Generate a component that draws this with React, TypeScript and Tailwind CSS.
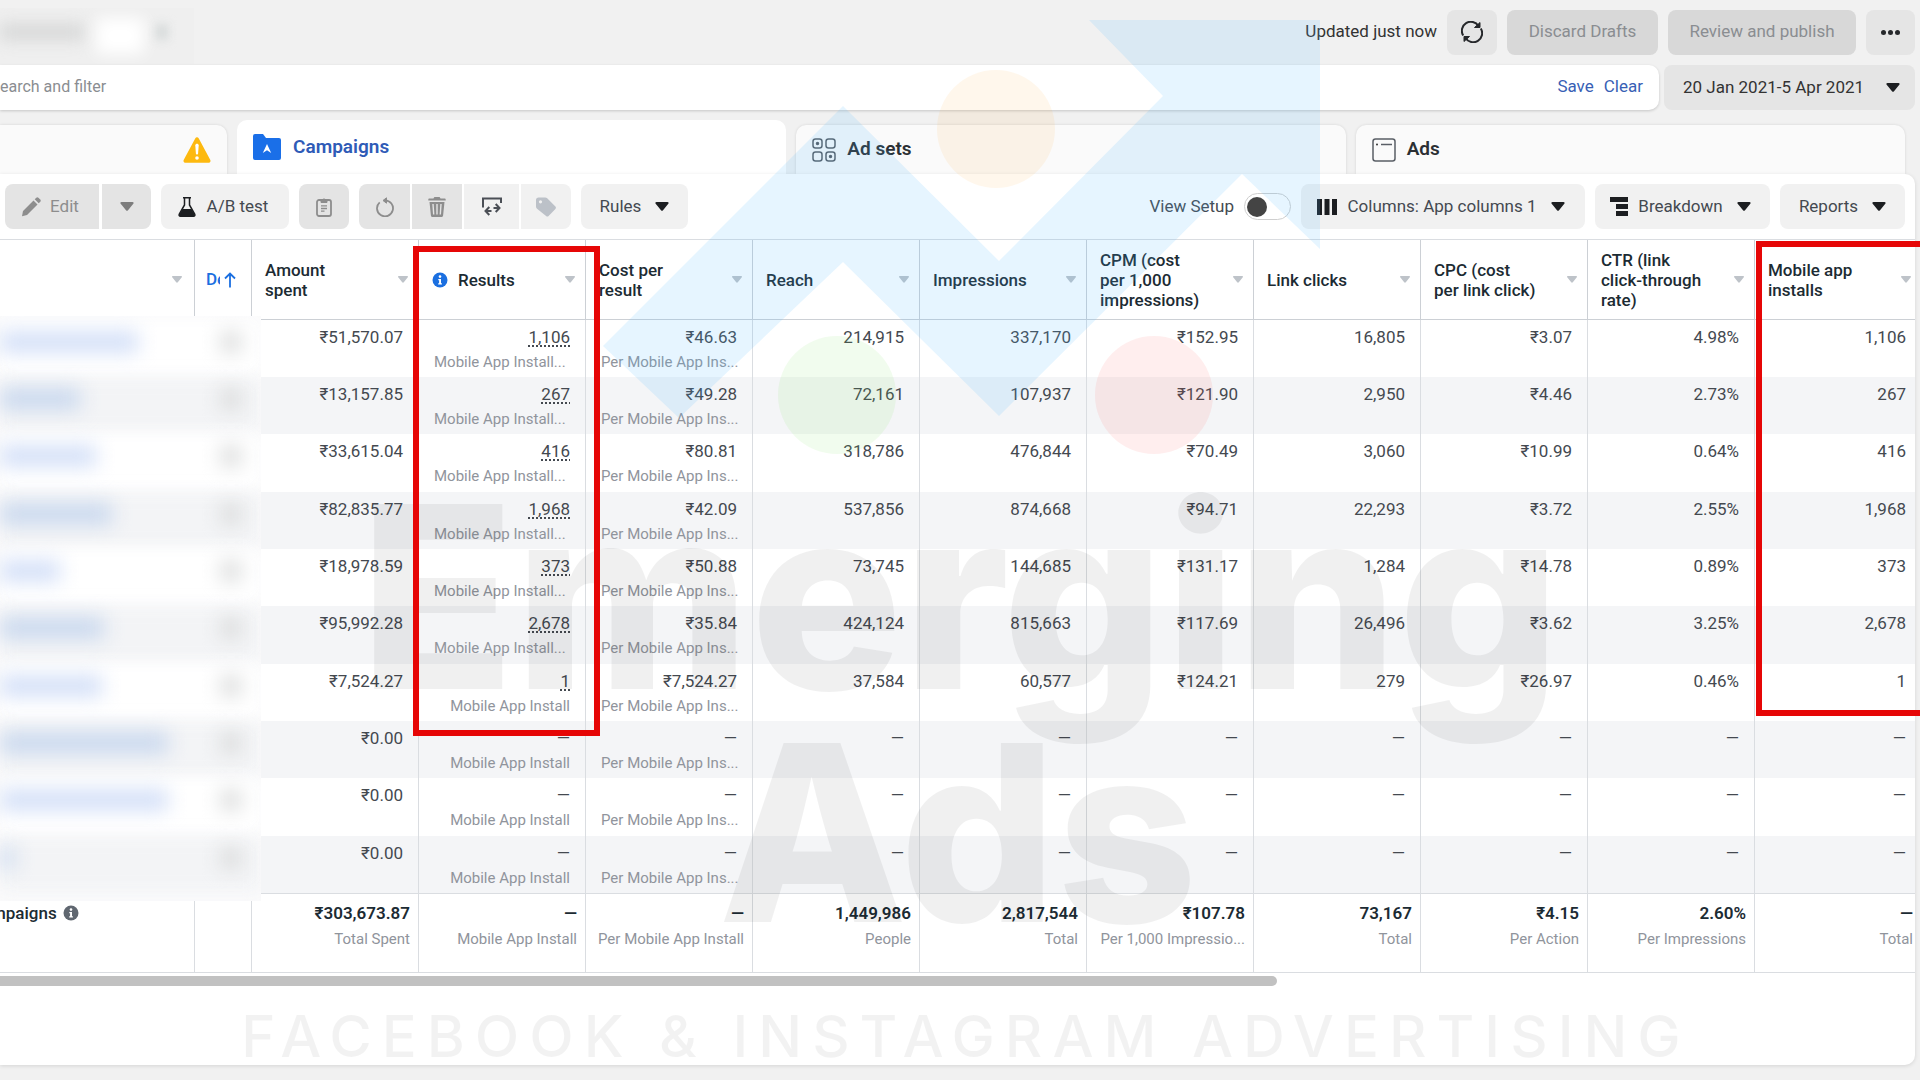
import type { ReactNode } from 'react';
import clsx from 'clsx';

type ToolButtonProps = {
  label?: string;
  children: ReactNode;
  disabled?: boolean;
  className?: string;
};

type Campaign = {
  nameWidth: number;
  spent: string;
  results: string;
  resultsNote: string;
  cost: string;
  rest: string[];
};

const DASH = '—';
const PER_INSTALL = 'Per Mobile App Ins...';

const campaigns: Campaign[] = [
  { nameWidth: 138, spent: '₹51,570.07', results: '1,106', resultsNote: 'Mobile App Install...', cost: '₹46.63', rest: ['214,915', '337,170', '₹152.95', '16,805', '₹3.07', '4.98%', '1,106'] },
  { nameWidth: 80, spent: '₹13,157.85', results: '267', resultsNote: 'Mobile App Install...', cost: '₹49.28', rest: ['72,161', '107,937', '₹121.90', '2,950', '₹4.46', '2.73%', '267'] },
  { nameWidth: 96, spent: '₹33,615.04', results: '416', resultsNote: 'Mobile App Install...', cost: '₹80.81', rest: ['318,786', '476,844', '₹70.49', '3,060', '₹10.99', '0.64%', '416'] },
  { nameWidth: 112, spent: '₹82,835.77', results: '1,968', resultsNote: 'Mobile App Install...', cost: '₹42.09', rest: ['537,856', '874,668', '₹94.71', '22,293', '₹3.72', '2.55%', '1,968'] },
  { nameWidth: 60, spent: '₹18,978.59', results: '373', resultsNote: 'Mobile App Install...', cost: '₹50.88', rest: ['73,745', '144,685', '₹131.17', '1,284', '₹14.78', '0.89%', '373'] },
  { nameWidth: 104, spent: '₹95,992.28', results: '2,678', resultsNote: 'Mobile App Install...', cost: '₹35.84', rest: ['424,124', '815,663', '₹117.69', '26,496', '₹3.62', '3.25%', '2,678'] },
  { nameWidth: 102, spent: '₹7,524.27', results: '1', resultsNote: 'Mobile App Install', cost: '₹7,524.27', rest: ['37,584', '60,577', '₹124.21', '279', '₹26.97', '0.46%', '1'] },
  { nameWidth: 168, spent: '₹0.00', results: DASH, resultsNote: 'Mobile App Install', cost: DASH, rest: [DASH, DASH, DASH, DASH, DASH, DASH, DASH] },
  { nameWidth: 168, spent: '₹0.00', results: DASH, resultsNote: 'Mobile App Install', cost: DASH, rest: [DASH, DASH, DASH, DASH, DASH, DASH, DASH] },
  { nameWidth: 14, spent: '₹0.00', results: DASH, resultsNote: 'Mobile App Install', cost: DASH, rest: [DASH, DASH, DASH, DASH, DASH, DASH, DASH] },
];

const totals = [
  ['₹303,673.87', 'Total Spent'],
  [DASH, 'Mobile App Install'],
  [DASH, 'Per Mobile App Install'],
  ['1,449,986', 'People'],
  ['2,817,544', 'Total'],
  ['₹107.78', 'Per 1,000 Impressio...'],
  ['73,167', 'Total'],
  ['₹4.15', 'Per Action'],
  ['2.60%', 'Per Impressions'],
  [DASH, 'Total'],
];

const columns = [
  'Amount\nspent',
  'Results',
  'Cost per\nresult',
  'Reach',
  'Impressions',
  'CPM (cost\nper 1,000\nimpressions)',
  'Link clicks',
  'CPC (cost\nper link click)',
  'CTR (link\nclick-through\nrate)',
  'Mobile app\ninstalls',
];

function Caret({ className = 'text-[#1c1e21]' }: { className?: string }) {
  return (
    <svg viewBox="0 0 14 9" className={clsx('h-[9px] w-[14px] shrink-0', className)} fill="currentColor" aria-hidden="true">
      <path d="M1.5 0h11c1 0 1.5 1 .8 1.8L8 8.300c-.6.700-1.400.700-2 0L.7 1.800C0 1 .5 0 1.500 0Z" />
    </svg>
  );
}

function SortCaret() {
  return (
    <svg viewBox="0 0 10 7" className="h-[7px] w-[10px] shrink-0 text-[#bec3c9]" fill="currentColor" aria-hidden="true">
      <path d="M.8 0h8.400c.8 0 1 .7.6 1.200L5.800 6.300c-.5.6-1.100.6-1.600 0L.2 1.200C-.2.7 0 0 .8 0Z" />
    </svg>
  );
}

function InfoIcon({ className }: { className: string }) {
  return (
    <svg viewBox="0 0 16 16" className={clsx('size-4 shrink-0', className)} aria-hidden="true">
      <circle cx="8" cy="8" r="7.500" fill="currentColor" />
      <path d="M6.300 7h2.700v4.200h.9v1.300H6.200v-1.300h.9V8.300h-.8V7Z" fill="#fff" />
      <circle cx="8" cy="4.600" r="1.300" fill="#fff" />
    </svg>
  );
}

function ToolButton({ label, children, disabled = false, className }: ToolButtonProps) {
  return (
    <button
      type="button"
      aria-label={label}
      disabled={disabled}
      className={clsx(
        'flex h-[45px] shrink-0 items-center justify-center whitespace-nowrap',
        disabled ? 'bg-[#e4e4e4] text-[#8d8d8d]' : 'bg-[#f1f1f1] text-[#444950]',
        className,
      )}
    >
      {children}
    </button>
  );
}

function TopBar() {
  return (
    <header className="flex h-[65px] items-center justify-between pr-[5px] pb-px">
      {/* account switcher, obscured */}
      <div className="mt-2 flex h-[56px] w-[194px] items-center overflow-hidden bg-[#efefef]">
        <span className="-mt-2 h-4 w-[84px] bg-[#d6d7d7] blur-[8px]" />
        <span className="ml-3 h-9 w-12 bg-white blur-[8px]" />
        <span className="-mt-2 ml-3 h-4 w-3 bg-[#d6dada] blur-[5px]" />
      </div>
      <div className="flex items-center gap-[10px]">
        <span className="text-[#333]">Updated just now</span>
        <button type="button" aria-label="Refresh" className="flex h-[45px] w-[50px] items-center justify-center rounded-lg bg-[#e5e5e5]">
          <svg viewBox="0 0 22 22" className="size-[22px]" fill="none" stroke="#26282b" strokeWidth="2" aria-hidden="true">
            <path d="M2.200 14.500A9 9 0 0 1 17.500 5M19.800 7.500A9 9 0 0 1 4.500 17" />
            <path d="M19 1.500v5h-5.500ZM3 20.500v-5h5.500Z" fill="#26282b" strokeWidth="1" />
          </svg>
        </button>
        <button type="button" disabled className="h-[45px] w-[151px] rounded-lg bg-[#d8d8d8] text-[#8a8d91]">
          Discard Drafts
        </button>
        <button type="button" disabled className="h-[45px] w-[188px] rounded-lg bg-[#d8d8d8] text-[#8a8d91]">
          Review and publish
        </button>
        <button type="button" aria-label="More" className="flex h-[45px] w-[49px] items-center justify-center gap-[2px] rounded-lg bg-[#e5e5e5]">
          <span className="size-[5px] rounded-full bg-[#26282b]" />
          <span className="size-[5px] rounded-full bg-[#26282b]" />
          <span className="size-[5px] rounded-full bg-[#26282b]" />
        </button>
      </div>
    </header>
  );
}

function FilterBar() {
  return (
    <div className="flex gap-[5px] pr-[5px]">
      <div className="flex h-[45px] flex-1 items-center rounded-r-[10px] bg-white pr-4 pb-px shadow-[0_1px_3px_rgba(0,0,0,0.18)]">
        <input
          type="text"
          aria-label="Search and filter"
          placeholder="earch and filter"
          className="min-w-0 flex-1 bg-transparent text-[16px] outline-none placeholder:text-[#8a8d91]"
        />
        <button type="button" className="text-[#385fb5]">Save</button>
        <button type="button" className="ml-[10px] text-[#385fb5]">Clear</button>
      </div>
      <button type="button" className="flex h-[45px] w-[251px] items-center justify-between rounded-lg bg-[#e5e5e5] pr-[15px] pl-[19px] text-[#333]">
        20 Jan 2021-5 Apr 2021
        <Caret />
      </button>
    </div>
  );
}

function LevelTabs() {
  return (
    <nav className="mt-[10px] flex items-end gap-[10px] pr-[15px] text-[19px] font-semibold">
      <div className="flex h-[49px] w-[227px] shrink-0 items-center justify-end rounded-tr-[10px] bg-[#fafafa] pr-4 shadow-[0_0_3px_rgba(0,0,0,0.12)]">
        <svg viewBox="0 0 28 26" className="h-[26px] w-[28px]" aria-label="Warning">
          <path d="M12.200 1.400c.8-1.500 2.800-1.500 3.600 0l11.400 21.400c.8 1.500-.1 3-1.800 3H2.600c-1.700 0-2.600-1.500-1.800-3L12.200 1.400Z" fill="#fdb90f" />
          <path d="M12.300 8.500c0-2.300 3.400-2.300 3.400 0l-.6 8c-.1 1.300-2.100 1.300-2.200 0l-.6-8Z" fill="#fff" />
          <circle cx="14" cy="21" r="1.800" fill="#fff" />
        </svg>
      </div>
      <a href="#campaigns" className="flex h-[54px] flex-1 items-center gap-3 rounded-t-[10px] bg-white px-4 text-[#2f5bb7]">
        <svg viewBox="0 0 28 26" className="h-[26px] w-[28px] shrink-0" aria-hidden="true">
          <path d="M2 0h8l3 4h13a2 2 0 0 1 2 2v18a2 2 0 0 1-2 2H2a2 2 0 0 1-2-2V2a2 2 0 0 1 2-2Z" fill="#1a6fe8" />
          <path d="m14 10 4.200 9-4.200-2.800L9.800 19 14 10Z" fill="#fff" />
        </svg>
        Campaigns
      </a>
      <a href="#adsets" className="flex h-[49px] flex-1 items-center gap-[11px] rounded-t-[10px] bg-[#fafafa] px-4 text-[#2b2f33] shadow-[0_0_3px_rgba(0,0,0,0.12)]">
        <svg viewBox="0 0 24 24" className="size-6 shrink-0" fill="none" stroke="#5a5f66" strokeWidth="1.500" aria-hidden="true">
          <rect x="1" y="1" width="9" height="9" rx="2.500" />
          <rect x="14" y="1" width="9" height="9" rx="2.500" />
          <rect x="1" y="14" width="9" height="9" rx="2.500" />
          <rect x="14" y="14" width="9" height="9" rx="2.500" />
          <circle cx="5.500" cy="5.500" r="1" fill="#333" />
          <circle cx="18.500" cy="18.500" r="1" fill="#333" />
        </svg>
        Ad sets
      </a>
      <a href="#ads" className="flex h-[49px] flex-1 items-center gap-[11px] rounded-t-[10px] bg-[#fafafa] px-4 text-[#2b2f33] shadow-[0_0_3px_rgba(0,0,0,0.12)]">
        <svg viewBox="0 0 24 24" className="size-6 shrink-0" fill="none" stroke="#5a5f66" strokeWidth="1.500" aria-hidden="true">
          <rect x="1" y="1" width="22" height="22" rx="2.500" />
          <path d="M9 6.500h11" />
          <circle cx="5" cy="6.500" r="1" fill="#333" stroke="none" />
        </svg>
        Ads
      </a>
    </nav>
  );
}

function Toolbar() {
  return (
    <div className="flex items-center justify-between py-[10px] pr-[10px] pl-[5px]">
      <div className="flex items-center gap-[10px]">
        <div className="flex gap-[3px]">
          <ToolButton disabled className="w-[94px] gap-[9px] rounded-l-lg pr-1">
            <svg viewBox="0 0 20 20" className="size-5" fill="currentColor" aria-hidden="true">
              <path d="M1 19.300 2 14 12.500 3.500l4 4L6 18l-5 1.300ZM13.700 2.300l1.600-1.600a1.500 1.500 0 0 1 2.100 0l1.900 1.900c.6.600.6 1.500 0 2.100l-1.600 1.600-4-4Z" />
            </svg>
            Edit
          </ToolButton>
          <ToolButton label="More edit options" disabled className="w-[49px] rounded-r-lg">
            <Caret className="text-[#7d7d7d]" />
          </ToolButton>
        </div>
        <ToolButton className="w-[128px] gap-[11px] rounded-lg pr-1">
          <svg viewBox="0 0 18 20" className="h-5 w-[18px]" aria-hidden="true">
            <path d="M5 .8h8M6.500 1v7L1.300 17c-.6 1.200 0 2.200 1.200 2.200h13c1.200 0 1.800-1 1.200-2.200L11.500 8V1" fill="none" stroke="#1c1e21" strokeWidth="1.500" />
            <path d="M4.500 12h9l3.200 5.500c.4.900 0 1.700-1 1.700H2.300c-1 0-1.400-.8-1-1.700L4.500 12Z" fill="#1c1e21" />
          </svg>
          A/B test
        </ToolButton>
        <ToolButton label="Duplicate" disabled className="w-[50px] rounded-lg">
          <svg viewBox="0 0 16 20" className="h-5 w-4" fill="none" stroke="currentColor" strokeWidth="1.800" aria-hidden="true">
            <rect x="1" y="3" width="14" height="16" rx="2" />
            <path d="M5 5.500V3.200h1.300a1.800 1.800 0 0 1 3.400 0H11v2.300H5Z" fill="currentColor" strokeWidth="1" />
            <path d="M5 8.800h6M5 11.500h6M5 14.200h3.500" strokeWidth="1.300" />
          </svg>
        </ToolButton>
        <div className="flex gap-[2px]">
          <ToolButton label="Undo" disabled className="w-[51px] rounded-l-lg">
            <svg viewBox="0 0 20 20" className="size-5" fill="none" stroke="currentColor" strokeWidth="1.800" aria-hidden="true">
              <path d="M10 3.300a8 8 0 1 1-5.300 2" />
              <path d="M11.500.8 8 3.500l3.500 2.700Z" fill="currentColor" strokeWidth="1" />
            </svg>
          </ToolButton>
          <ToolButton label="Delete" disabled className="w-[50px]">
            <svg viewBox="0 0 18 20" className="h-5 w-[18px]" fill="currentColor" aria-hidden="true">
              <path d="M5.500 1.500C5.700.600 6.200 0 7 0h4c.8 0 1.300.6 1.500 1.500h4c.8 0 1.200.5 1.200 1v1H.3v-1c0-.5.4-1 1.200-1h4ZM1.500 5h15l-1.400 13.500c-.1.900-.7 1.500-1.500 1.500H4.400c-.8 0-1.400-.6-1.500-1.500L1.500 5Z" />
              <path d="m5 7 .7 10.500M9 7v10.500M13 7l-.7 10.500" stroke="#e4e4e4" strokeWidth="1.400" />
            </svg>
          </ToolButton>
          <ToolButton label="Export or import" className="w-[55px]">
            <svg viewBox="0 0 20 20" className="size-5" fill="none" stroke="#4b4f56" strokeWidth="2" aria-hidden="true">
              <path d="M1 10.500V1.500h18v4.500" />
              <path d="M7.300 10 3.500 14l3.800 4M3.500 14h6" />
              <path d="m13.700 7 3.800 4-3.800 4M17.500 11h-6" />
            </svg>
          </ToolButton>
          <ToolButton label="Tag" className="w-[50px] rounded-r-lg">
            <svg viewBox="0 0 22 20" className="h-5 w-[22px]" aria-hidden="true">
              <path d="M1 3c0-1.500 1-2.500 2.500-2.500h6.700c.8 0 1.500.3 2 .8l8.200 8.200c.7.700.7 1.700 0 2.400l-6.800 7c-.7.700-1.800.700-2.500 0L2 11.800c-.7-.7-1-1.300-1-2.200V3Z" fill="#bcc1c8" />
              <circle cx="5.500" cy="4.800" r="1.600" fill="#f1f1f1" />
            </svg>
          </ToolButton>
        </div>
        <ToolButton className="w-[107px] gap-[14px] rounded-lg">
          Rules <Caret />
        </ToolButton>
      </div>

      <div className="flex items-center gap-[10px]">
        <label htmlFor="view-setup" className="text-[#444950]">View Setup</label>
        <input
          id="view-setup"
          type="checkbox"
          role="switch"
          className="flex h-[27px] w-[47px] appearance-none items-center rounded-full border border-[#cfcfcf] bg-white px-[2px] before:size-5 before:rounded-full before:bg-[#444] checked:justify-end"
        />
        <ToolButton className="w-[284px] gap-[14px] rounded-lg pr-1">
          <svg viewBox="0 0 20 16" className="-mr-1 h-4 w-5" fill="#1c1e21" aria-hidden="true">
            <path d="M0 0h5v16H0zM7.500 0h5v16h-5zM15 0h5v16h-5z" />
          </svg>
          Columns: App columns 1 <Caret />
        </ToolButton>
        <ToolButton className="w-[175px] gap-[14px] rounded-lg pr-1">
          <svg viewBox="0 0 18 20" className="-mr-1 h-5 w-[18px]" fill="#1c1e21" aria-hidden="true">
            <path d="M0 0h18v5H0zM6 7h12v5H6zM6 14h12v5H6z" />
          </svg>
          Breakdown <Caret />
        </ToolButton>
        <ToolButton className="w-[125px] gap-[14px] rounded-lg">
          Reports <Caret />
        </ToolButton>
      </div>
    </div>
  );
}

function MetricCell({ value, note, linked = false }: { value: string; note?: string; linked?: boolean }) {
  const cut = note?.endsWith('...');
  return (
    <td className="border-l border-[#dadde1] pt-[6px] pr-[15px] pl-[15px] text-right align-top whitespace-nowrap">
      <div className="leading-[22px] text-[#444950]">
        <span className={clsx(linked && 'underline decoration-dotted decoration-2 underline-offset-2')}>{value}</span>
      </div>
      {note && (
        <div className={clsx('mt-1 text-[15px] leading-5 text-[#90949c]', cut && 'text-left')}>{note}</div>
      )}
    </td>
  );
}

function CampaignTable() {
  return (
    <div className="overflow-hidden border-y border-[#dadde1]">
      <table className="w-full min-w-[1921px] table-fixed border-separate border-spacing-0">
        <colgroup>
          <col className="w-[194px]" />
          <col className="w-[57px]" />
          {columns.map((name) => (
            <col key={name} className="w-[167px]" />
          ))}
        </colgroup>
        <thead>
          <tr className="h-[80px] text-left text-[#1c2b33]">
            <th className="border-b border-[#ccd0d5] pr-3">
              <div className="flex justify-end"><SortCaret /></div>
            </th>
            <th className="border-b border-l border-[#ccd0d5] pl-[11px]">
              <div className="flex items-center font-medium text-[#1b6fe0]">
                <span className="w-[14px] overflow-hidden">De</span>
                <svg viewBox="0 0 12 16" className="ml-1 h-4 w-3" fill="none" stroke="currentColor" strokeWidth="1.800" aria-hidden="true">
                  <path d="M6 15.500V1.500M1 6.500l5-5 5 5" />
                </svg>
              </div>
            </th>
            {columns.map((name) => (
              <th key={name} className="border-b border-l border-[#ccd0d5] pr-[10px] pl-[13px]">
                <div className="flex items-center justify-between">
                  <div className="flex items-center gap-[10px] leading-5 font-medium whitespace-pre">
                    {name === 'Results' && <InfoIcon className="text-[#1b6fe0]" />}
                    {name}
                  </div>
                  <SortCaret />
                </div>
              </th>
            ))}
          </tr>
        </thead>
        <tbody>
          {campaigns.map((row, i) => (
            <tr key={i} className="h-[57px] even:bg-[#f4f5f7] nth-[3n]:h-[58px]">
              <td />
              <td />
              <MetricCell value={row.spent} />
              <MetricCell value={row.results} note={row.resultsNote} linked={row.results !== DASH} />
              <MetricCell value={row.cost} note={PER_INSTALL} />
              {row.rest.map((value, j) => (
                <MetricCell key={j} value={value} />
              ))}
            </tr>
          ))}
        </tbody>
        <tfoot>
          <tr className="h-[79px]">
            <td className="border-t border-[#dadde1] pt-2 align-top">
              <div className="-ml-[9px] flex items-center gap-[6px] leading-[22px] font-medium text-[#1c2b33]">
                mpaigns <InfoIcon className="text-[#606770]" />
              </div>
            </td>
            <td className="border-t border-l border-[#dadde1]" />
            {totals.map(([value, note], i) => (
              <td key={i} className="border-t border-l border-[#dadde1] pt-2 pr-2 text-right align-top whitespace-nowrap">
                <div className="leading-[22px] font-semibold text-[#1c2b33]">{value}</div>
                <div className="mt-1 text-[15px] leading-[22px] text-[#90949c]">{note}</div>
              </td>
            ))}
          </tr>
        </tfoot>
      </table>
    </div>
  );
}

// Campaign names are hidden behind a soft blur
function BlurredNames() {
  return (
    <div className="absolute top-[316px] left-0 w-[261px] overflow-hidden bg-[#fbfbfc] pt-1 pb-2">
      {campaigns.map((row, i) => (
        <div key={i} className="relative flex h-[57px] items-start justify-between nth-[3n]:h-[58px]">
          <div className={clsx('absolute inset-0 blur-[8px]', i % 2 ? 'bg-[#f3f4f6]' : 'bg-white')} />
          <span
            className={clsx('relative mt-3 h-5 blur-[10px]', i % 2 ? 'bg-[#c6d6ee]' : 'bg-[#d0ddf7]')}
            style={{ width: row.nameWidth }}
          />
          <span className="relative mt-3 mr-5 h-5 w-5 bg-[#d8d9d9] blur-[10px]" />
        </div>
      ))}
    </div>
  );
}

function Watermark() {
  return (
    <svg viewBox="0 0 1920 1080" className="pointer-events-none absolute inset-x-0 top-0 w-full" aria-hidden="true">
      <path
        d="M1089 20H1320V249L1242 174 999 416 843 262 679 418 603 346 843 106 999 261 1163 96Z"
        fill="#4bb9ff"
        fillOpacity="0.14"
      />
      <circle cx="996" cy="129" r="59" fill="#ffaf41" fillOpacity="0.1" />
      <circle cx="837" cy="395" r="59" fill="#73e155" fillOpacity="0.1" />
      <circle cx="1154" cy="395" r="59" fill="#ff5555" fillOpacity="0.1" />
      <g fill="#000" className="font-['Inter']">
        <text x="960" y="689" textAnchor="middle" fontSize="254" fontWeight="800" fillOpacity="0.06">Emerging</text>
        <text x="958" y="922" textAnchor="middle" fontSize="246" fontWeight="800" fillOpacity="0.06">Ads</text>
        <text x="966" y="1057" textAnchor="middle" fontSize="58" fontWeight="500" fillOpacity="0.05" className="tracking-[10px]">
          FACEBOOK &amp; INSTAGRAM ADVERTISING
        </text>
      </g>
    </svg>
  );
}

export default function App() {
  return (
    <div className="relative flex min-h-screen flex-col overflow-hidden bg-[#f1f1f1] font-['Roboto','Noto_Sans',sans-serif] text-[17px]">
      <TopBar />
      <FilterBar />
      <LevelTabs />
      <main className="mr-[5px] mb-[15px] flex-1 rounded-r-[10px] bg-white shadow-[0_1px_4px_rgba(0,0,0,0.12)]">
        <Toolbar />
        <CampaignTable />
        <div className="mt-[3px] h-[10px] w-2/3 rounded-r-full bg-[#c1c1c1]" />
      </main>
      <BlurredNames />
      <Watermark />
      <div className="pointer-events-none absolute top-[246px] left-[413px] h-[490px] w-[187px] border-[6px] border-[#e60606]" />
      <div className="pointer-events-none absolute top-[241px] -right-[6px] h-[475px] w-[170px] border-[6px] border-[#e60606]" />
    </div>
  );
}
